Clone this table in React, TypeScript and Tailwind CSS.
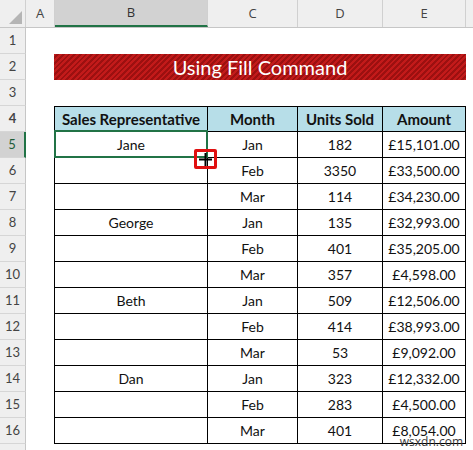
import React from 'react';

type Row = { name: string; month: string; units: string; amount: string };

const rows: Row[] = [
    { name: 'Jane', month: 'Jan', units: '182', amount: '£15,101.00' },
    { name: '', month: 'Feb', units: '3350', amount: '£33,500.00' },
    { name: '', month: 'Mar', units: '114', amount: '£34,230.00' },
    { name: 'George', month: 'Jan', units: '135', amount: '£32,993.00' },
    { name: '', month: 'Feb', units: '401', amount: '£35,205.00' },
    { name: '', month: 'Mar', units: '357', amount: '£4,598.00' },
    { name: 'Beth', month: 'Jan', units: '509', amount: '£12,506.00' },
    { name: '', month: 'Feb', units: '414', amount: '£38,993.00' },
    { name: '', month: 'Mar', units: '53', amount: '£9,092.00' },
    { name: 'Dan', month: 'Jan', units: '323', amount: '£12,332.00' },
    { name: '', month: 'Feb', units: '283', amount: '£4,500.00' },
    { name: '', month: 'Mar', units: '401', amount: '£8,054.00' },
];

function RowHead({ n, active = false }: { n?: number; active?: boolean }) {
    return (
        <div
            className={`w-[26px] shrink-0 flex items-center justify-center text-[13px] border-b border-b-[#d6d6d6] ${active
                ? 'bg-[#d2d2d2] text-[#1e5c38] border-r-2 border-r-[#217346]'
                : 'bg-[#efefef] text-[#444] border-r border-r-[#c6c6c6]'
                }`}
        >
            {n}
        </div>
    );
}

export default function App() {
    const cell = 'h-full flex items-center justify-center border-r border-b border-black';

    return (
        <div className="relative w-[473px] h-[450px] overflow-hidden bg-white font-['Lato',sans-serif] text-[#111]">
            {/* Column headers */}
            <div className="flex h-[28px] bg-[#efefef] border-b border-[#c6c6c6] text-[13px] text-[#444] font-['Open_Sans',sans-serif]">
                <div className="w-[26px] shrink-0 border-r border-[#d0d0d0] flex items-end justify-end p-[3px]">
                    <svg width="13" height="13" viewBox="0 0 13 13">
                        <polygon points="13,0 13,13 0,13" fill="#b5b5b5" />
                    </svg>
                </div>
                <div className="w-[29px] shrink-0 border-r border-[#d0d0d0] flex items-center justify-center">A</div>
                <div className="w-[153px] shrink-0 border-r border-[#d0d0d0] bg-[#d2d2d2] border-b-2 border-b-[#217346] flex items-center justify-center text-[#333]">B</div>
                <div className="w-[90px] shrink-0 border-r border-[#d0d0d0] flex items-center justify-center">C</div>
                <div className="w-[85px] shrink-0 border-r border-[#d0d0d0] flex items-center justify-center">D</div>
                <div className="w-[83px] shrink-0 border-r border-[#d0d0d0] flex items-center justify-center">E</div>
                <div className="flex-1" />
            </div>

            {/* Row 1 */}
            <div className="flex h-[26px]">
                <RowHead n={1} />
            </div>

            {/* Row 2 - title */}
            <div className="flex h-[26px]">
                <RowHead n={2} />
                <div className="w-[28px] shrink-0" />
                <div className="w-[412px] h-full flex items-center justify-center text-white text-[20px] bg-[repeating-linear-gradient(135deg,#c21a1a_0px,#c21a1a_2px,#9c1010_2px,#9c1010_4px)]">
                    Using Fill Command
                </div>
            </div>

            {/* Row 3 */}
            <div className="flex h-[26px]">
                <RowHead n={3} />
            </div>

            {/* Row 4 - table header */}
            <div className="flex h-[26px] text-[15px] font-bold">
                <RowHead n={4} />
                <div className="w-[28px] shrink-0" />
                <div className="flex h-full border-t border-black bg-[#b7dee8]">
                    <div className={`${cell} w-[154px] border-l`}>Sales Representative</div>
                    <div className={`${cell} w-[90px]`}>Month</div>
                    <div className={`${cell} w-[85px]`}>Units Sold</div>
                    <div className={`${cell} w-[83px]`}>Amount</div>
                </div>
            </div>

            {/* Data rows */}
            {rows.map((r, i) => (
                <div key={i} className="flex h-[26px] text-[14px]">
                    <RowHead n={i + 5} active={i === 0} />
                    <div className="w-[28px] shrink-0" />
                    <div className={`${cell} w-[154px] border-l relative`}>
                        {r.name}
                        {i === 0 && (
                            <>
                                <div className="absolute left-[-1px] top-[-2px] right-[-1px] bottom-[-1px] border-2 border-[#217346]" />
                                <div className="absolute z-10 left-[139px] top-[17px] w-[23px] h-[20px] border-[3px] border-[#e01010] rounded-[2px] flex items-center justify-center">
                                    <svg width="13" height="13" viewBox="0 0 13 13">
                                        <rect x="5.5" y="0" width="2" height="13" fill="#000" />
                                        <rect x="0" y="5.5" width="13" height="2" fill="#000" />
                                    </svg>
                                </div>
                            </>
                        )}
                    </div>
                    <div className={`${cell} w-[90px]`}>{r.month}</div>
                    <div className={`${cell} w-[85px]`}>{r.units}</div>
                    <div className={`${cell} w-[83px]`}>{r.amount}</div>
                </div>
            ))}

            {/* Row 17 (partial, number out of view) */}
            <div className="flex h-[26px]">
                <RowHead />
            </div>

            <div className="absolute right-[10px] bottom-[-1px] text-[12px] text-[#3a3a3a] font-['Open_Sans',sans-serif]">
                wsxdn.com
            </div>
        </div>
    );
}
